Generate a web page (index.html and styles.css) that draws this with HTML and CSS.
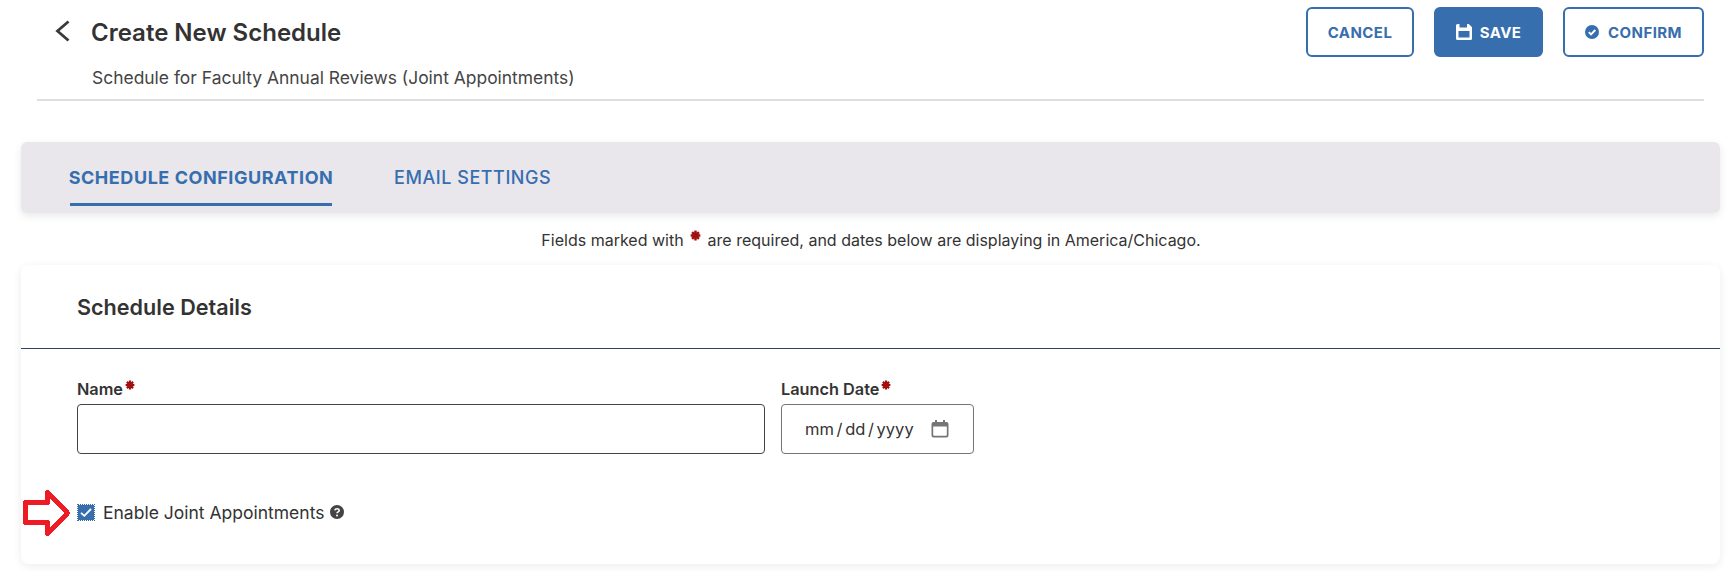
FILE: index.html
```html
<!DOCTYPE html>
<html lang="en">
<head>
<meta charset="utf-8">
<title>Create New Schedule</title>
<link rel="stylesheet" href="styles.css">
</head>
<body>
<svg class="defs" width="0" height="0" aria-hidden="true"><defs><g id="star"><path d="M5 .5V9.500M.6 5H9.400M1.900 1.900L8.100 8.100M8.100 1.900L1.900 8.100" stroke="#a10f0f" stroke-width="2.200" fill="none"/></g></defs></svg>
<header class="page-header">
  <div class="header-top">
    <div class="title-row">
      <svg class="back" viewBox="0 0 16 22" width="16" height="22" aria-hidden="true"><path d="M14.500 1.500 L3.500 11 L14.500 20.500" fill="none" stroke="#3a3a3a" stroke-width="2.800"/></svg>
      <h1>Create New Schedule</h1>
    </div>
    <div class="actions">
      <button class="btn outline cancel" type="button">CANCEL</button>
      <button class="btn solid save" type="button">
        <svg viewBox="0 0 16 16" width="16" height="16" aria-hidden="true"><path fill-rule="evenodd" d="M1.500 0H3.500V3.500H11V0H12.800L16 3.200V14.500A1.500 1.500 0 0 1 14.500 16H1.500A1.500 1.500 0 0 1 0 14.500V1.500A1.500 1.500 0 0 1 1.500 0ZM2.500 7V13.500H13.500V7Z" fill="#fff"/></svg>
        SAVE</button>
      <button class="btn outline confirm" type="button">
        <svg viewBox="0 0 14 14" width="14" height="14" aria-hidden="true"><circle cx="7" cy="7" r="7" fill="#376eae"/><path d="M3.800 7.200 L6 9.400 L10.300 5" fill="none" stroke="#fff" stroke-width="1.900"/></svg>
        CONFIRM</button>
    </div>
  </div>
  <p class="subtitle">Schedule for Faculty Annual Reviews (Joint Appointments)</p>
</header>

<nav class="tabs">
  <a class="tab active">SCHEDULE CONFIGURATION</a>
  <a class="tab">EMAIL SETTINGS</a>
</nav>

<p class="notice">Fields marked with <svg class="star notice-star" viewBox="0 0 10 10" aria-hidden="true"><use href="#star"/></svg> are required, and dates below are displaying in America/Chicago.</p>

<section class="card">
  <h2>Schedule Details</h2>
  <div class="card-body">
    <div class="fields">
      <div class="field name-field">
        <label class="field-label">Name<svg class="star" viewBox="0 0 10 10" aria-hidden="true"><use href="#star"/></svg></label>
        <input class="text-input" type="text">
      </div>
      <div class="field date-field">
        <label class="field-label">Launch Date<svg class="star" viewBox="0 0 10 10" aria-hidden="true"><use href="#star"/></svg></label>
        <div class="date-input">
          <span class="date-text">mm / dd / yyyy</span>
          <svg viewBox="0 0 18 18" width="18" height="18" aria-hidden="true"><path fill-rule="evenodd" d="M4 0H6V2H12V0H14V2H15.500A2 2 0 0 1 17.500 4V15.500A2 2 0 0 1 15.500 17.500H2.500A2 2 0 0 1 .5 15.500V4A2 2 0 0 1 2.500 2H4ZM2.200 6.500V15A.8.8 0 0 0 3 15.800H15A.8.8 0 0 0 15.800 15V6.500Z" fill="#757575"/></svg>
        </div>
      </div>
    </div>
    <div class="joint">
      <svg class="arrow" viewBox="0 0 48 48" width="48" height="48" aria-hidden="true"><path d="M2.500 13.500H24.500V3.500L44.500 24L24.500 44.500V33.500H2.500Z" fill="#fff" stroke="#ed1c24" stroke-width="5" stroke-linejoin="round" shape-rendering="crispEdges"/></svg>
      <span class="check" role="checkbox" aria-checked="true"><svg viewBox="0 0 16 15" width="16" height="15" aria-hidden="true"><path d="M3 7.800L6.300 10.800L13 4" fill="none" stroke="#fff" stroke-width="1.800"/></svg></span>
      <span class="check-label">Enable Joint Appointments</span>
      <svg class="help" viewBox="0 0 14 14" width="14" height="14" aria-hidden="true"><circle cx="7" cy="7" r="7" fill="#444"/><path d="M4.900 5.400C5 3.200 9.200 3.200 9.200 5.400C9.200 7 7 6.800 7 8.300" fill="none" stroke="#fff" stroke-width="1.600"/><circle cx="7" cy="10.500" r="1" fill="#fff"/></svg>
    </div>
  </div>
</section>
</body>
</html>
```
FILE: styles.css
```css
* { box-sizing: border-box; }
html, body { margin: 0; padding: 0; }
body {
  width: 1730px;
  height: 571px;
  overflow: hidden;
  background: #fff;
  font-family: Inter, "Liberation Sans", sans-serif;
  color: #333;
}
.defs { position: absolute; }
.page-header {
  margin: 0 26px 0 37px;
  height: 101px;
  border-bottom: 2px solid #dedede;
}
.header-top {
  display: flex;
  justify-content: space-between;
  padding-top: 7px;
  height: 57px;
}
.title-row {
  display: flex;
  align-items: center;
  height: 50px;
  padding-left: 17px;
}
.back { margin-right: 21px; margin-top: -2px; }
h1 {
  margin: 0;
  font-size: 24px;
  font-weight: 600;
  color: #333;
}
.actions { display: flex; gap: 20px; }
.btn {
  display: flex;
  align-items: center;
  justify-content: center;
  gap: 8px;
  height: 50px;
  padding: 0;
  border-radius: 6px;
  font-family: inherit;
  font-size: 15px;
  font-weight: 700;
  letter-spacing: 0.45px;
  border: 2px solid #376eae;
}
.outline { background: #fff; color: #376eae; }
.solid { background: #376eae; color: #fff; }
.cancel { width: 108px; }
.save { width: 109px; }
.confirm { width: 141px; gap: 9px; }
.subtitle {
  margin: 10px 0 0 55px;
  font-size: 17.450px;
  line-height: 22px;
  color: #444;
}
.tabs {
  margin: 41px 10px 0 21px;
  height: 71px;
  display: flex;
  gap: 62px;
  padding-left: 49px;
  background: #e9e7ec;
  border-radius: 6px;
  box-shadow: 0 3px 8px rgba(0,0,0,.09);
}
.tab {
  height: 64px;
  padding-top: 7px;
  display: flex;
  align-items: center;
  justify-content: center;
  font-size: 18px;
  letter-spacing: 0.55px;
  font-weight: 500;
  color: #376eae;
}
.tab.active {
  font-weight: 700;
  width: 262px;
  white-space: nowrap;
  border-bottom: 3px solid #376eae;
  padding-top: 10px;
}
.notice {
  margin: 17px 0 0;
  padding-left: 12px;
  height: 20px;
  text-align: center;
  font-size: 16px;
  line-height: 20px;
  color: #333;
}
.star { width: 10px; height: 10px; flex: none; }
.notice-star { vertical-align: top; margin: 0 2px; width: 11px; height: 11px; }
.card {
  margin: 15px 10px 0 21px;
  height: 299px;
  background: #fff;
  border-radius: 8px;
  box-shadow: 0 2px 10px rgba(0,0,0,.08);
}
h2 {
  margin: 0;
  height: 84px;
  padding: 30px 0 0 56px;
  font-size: 21.600px;
  line-height: 24px;
  font-weight: 600;
  color: #333;
  border-bottom: 1px solid #2f3f6b;
}
.card-body { padding: 30px 0 0 56px; }
.fields { display: flex; gap: 16px; }
.field { display: flex; flex-direction: column; gap: 5px; }
.name-field { width: 688px; }
.date-field { width: 193px; }
.field-label {
  font-size: 16.300px;
  line-height: 20px;
  font-weight: 600;
  color: #333;
  display: flex;
  align-items: flex-start;
}
.field-label .star { margin: 1px 0 0 2px; }
.text-input {
  height: 50px;
  width: 100%;
  border: 1px solid #444;
  border-radius: 4px;
  background: #fff;
}
.date-input {
  height: 50px;
  border: 1px solid #757575;
  border-radius: 4px;
  display: flex;
  align-items: center;
  padding-left: 23px;
  gap: 17px;
  color: #333;
}
.date-text { font-size: 16.500px; word-spacing: -2px; }
.joint {
  position: relative;
  display: flex;
  align-items: center;
  margin-top: 46px;
  height: 24px;
}
.arrow { position: absolute; left: -54px; top: -11px; }
.check {
  width: 16px;
  height: 15px;
  margin: 0 9px 0 1px;
  background: #376eae;
  outline: 1px dotted #376eae;
  display: flex;
}
.check-label { font-size: 17.500px; color: #333; }
.help { margin-left: 6px; }
```
